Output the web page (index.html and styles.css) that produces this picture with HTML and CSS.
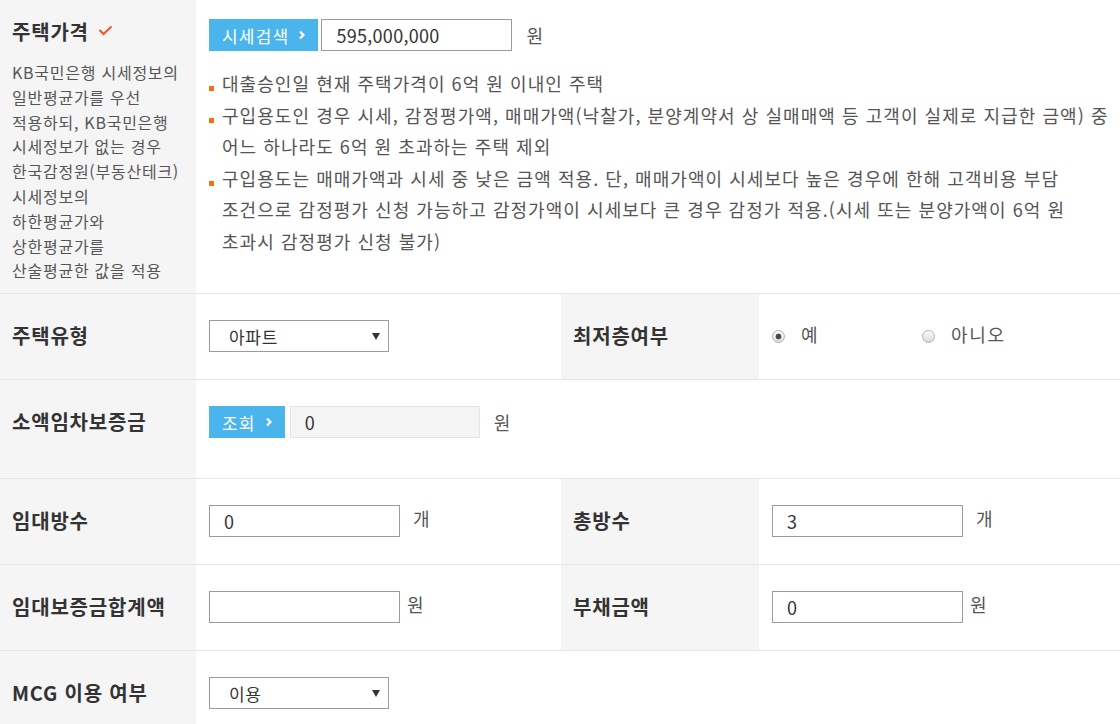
FILE: index.html
```html
<!DOCTYPE html>
<html lang="ko">
<head>
  <meta charset="UTF-8">
  <meta name="viewport" content="width=device-width, initial-scale=1.0">
  <title>주택가격 입력</title>
  <link rel="stylesheet" href="styles.css">
</head>
<body>
  <table class="form-table">
    <colgroup>
      <col class="col-th">
      <col class="col-td">
      <col class="col-th2">
      <col>
    </colgroup>
    <tr class="row-price">
      <th>
        <div class="th-title">주택가격
          <svg class="check" width="15" height="11" viewBox="0 0 15 11"><polyline points="1.5,5 5.5,9 13.5,1.5" fill="none" stroke="#f15a2b" stroke-width="2.2"/></svg>
        </div>
        <p class="th-desc">KB국민은행 시세정보의<br>일반평균가를 우선<br>적용하되, KB국민은행<br>시세정보가 없는 경우<br>한국감정원(부동산테크)<br>시세정보의<br>하한평균가와<br>상한평균가를<br>산술평균한 값을 적용</p>
      </th>
      <td colspan="3">
        <div class="field">
          <button class="btn-blue">시세검색
            <svg class="chev" width="6" height="10" viewBox="0 0 6 10"><polyline points="1,1.5 4.5,5 1,8.5" fill="none" stroke="#fff" stroke-width="2.2"/></svg>
          </button>
          <input class="inp inp-price" type="text" value="595,000,000">
          <span class="unit unit-wide">원</span>
        </div>
        <ul class="notes">
          <li>대출승인일 현재 주택가격이 6억 원 이내인 주택</li>
          <li>구입용도인 경우 시세, 감정평가액, 매매가액(낙찰가, 분양계약서 상 실매매액 등 고객이 실제로 지급한 금액) 중 어느 하나라도 6억 원 초과하는 주택 제외</li>
          <li>구입용도는 매매가액과 시세 중 낮은 금액 적용. 단, 매매가액이 시세보다 높은 경우에 한해 고객비용 부담 조건으로 감정평가 신청 가능하고 감정가액이 시세보다 큰 경우 감정가 적용.(시세 또는 분양가액이 6억 원 초과시 감정평가 신청 불가)</li>
        </ul>
      </td>
    </tr>
    <tr>
      <th>주택유형</th>
      <td>
        <div class="select">
          <select><option>아파트</option></select>
        </div>
      </td>
      <th class="th-right">최저층여부</th>
      <td class="td-right">
        <div class="field">
          <label class="radio-opt"><input type="radio" name="low" checked><span>예</span></label>
          <label class="radio-opt"><input type="radio" name="low"><span>아니오</span></label>
        </div>
      </td>
    </tr>
    <tr class="row-deposit">
      <th>소액임차보증금</th>
      <td colspan="3">
        <div class="field">
          <button class="btn-blue btn-small">조회
            <svg class="chev" width="6" height="10" viewBox="0 0 6 10"><polyline points="1,1.5 4.5,5 1,8.5" fill="none" stroke="#fff" stroke-width="2.2"/></svg>
          </button>
          <input class="inp inp-readonly" type="text" value="0" readonly>
          <span class="unit unit-wide">원</span>
        </div>
      </td>
    </tr>
    <tr>
      <th>임대방수</th>
      <td>
        <div class="field">
          <input class="inp" type="text" value="0">
          <span class="unit unit-up">개</span>
        </div>
      </td>
      <th class="th-right">총방수</th>
      <td class="td-right">
        <div class="field">
          <input class="inp" type="text" value="3">
          <span class="unit unit-up">개</span>
        </div>
      </td>
    </tr>
    <tr>
      <th>임대보증금합계액</th>
      <td>
        <div class="field">
          <input class="inp" type="text" value="">
          <span class="unit unit-up unit-near">원</span>
        </div>
      </td>
      <th class="th-right">부채금액</th>
      <td class="td-right">
        <div class="field">
          <input class="inp" type="text" value="0">
          <span class="unit unit-up unit-near">원</span>
        </div>
      </td>
    </tr>
    <tr>
      <th>MCG 이용 여부</th>
      <td colspan="3">
        <div class="select select-short">
          <select><option>이용</option></select>
        </div>
      </td>
    </tr>
  </table>
</body>
</html>
```

FILE: styles.css
```css
* {
  box-sizing: border-box;
}
body {
  margin: 0;
  font-family: "Noto Sans CJK KR", "Noto Sans", sans-serif;
  color: #555;
  background: #fff;
}
.form-table {
  width: 1120px;
  border-collapse: collapse;
  table-layout: fixed;
}
.col-th {
  width: 196px;
}
.col-td {
  width: 365px;
}
.col-th2 {
  width: 198px;
}
.form-table th,
.form-table td {
  padding: 26px 0 27px 13px;
  border-bottom: 1px solid #e6e6e6;
  vertical-align: top;
  text-align: left;
}
.form-table th {
  padding-left: 12px;
  background: #f5f5f5;
  color: #333;
  font-size: 20px;
  font-weight: bold;
  line-height: 32px;
  letter-spacing: .8px;
}
.form-table td {
  font-size: 18px;
  letter-spacing: 1px;
}

/* first row */
.row-price th {
  padding: 19px 8px 10px 12px;
}
.row-price td {
  padding: 19px 10px 10px 13px;
}
.th-title {
  display: flex;
  align-items: center;
  line-height: 26px;
}
.check {
  margin: 0 0 3px 9px;
}
.th-desc {
  margin: 15px 0 0;
  font-size: 16px;
  font-weight: normal;
  line-height: 24.8px;
  letter-spacing: .75px;
  color: #555;
}
.notes {
  margin: 17px 0 0;
  padding: 0;
  list-style: none;
  font-size: 18px;
  line-height: 31.5px;
  letter-spacing: 1.05px;
  word-break: keep-all;
}
.notes li {
  position: relative;
  padding-left: 13px;
}
.notes li::before {
  content: "";
  position: absolute;
  left: 0;
  top: 18px;
  width: 5px;
  height: 5px;
  background: #f5700a;
}

.row-deposit th,
.row-deposit td {
  padding-bottom: 40px;
}

.field {
  display: flex;
  align-items: center;
  height: 32px;
}
.btn-blue {
  display: inline-flex;
  align-items: center;
  height: 32px;
  margin-right: 3px;
  padding: 0 13px;
  border: 0;
  background: #4ab5ec;
  color: #fff;
  font-family: inherit;
  font-size: 17px;
  letter-spacing: 1.2px;
}
.btn-blue .chev {
  margin-left: 10px;
}
.btn-small {
  margin-right: 5px;
}
.inp {
  width: 191px;
  height: 32px;
  padding: 0 14px;
  border: 1px solid #9c9c9c;
  background: #fff;
  color: #333;
  font-family: inherit;
  font-size: 18px;
  letter-spacing: .3px;
}
.inp-readonly {
  width: 190px;
  border-color: #e3e3e3;
  background: #f5f5f5;
}
.unit {
  margin-left: 13px;
  font-size: 18px;
  color: #555;
}
.unit-wide {
  margin-left: 14px;
}
.unit-up {
  margin-bottom: 6px;
}
.unit-near {
  margin-left: 7px;
}

.select {
  position: relative;
  width: 180px;
  height: 32px;
}
.select select {
  width: 100%;
  height: 32px;
  padding: 0 19px;
  border: 1px solid #9c9c9c;
  background: #fff;
  color: #333;
  font-family: inherit;
  font-size: 17px;
  letter-spacing: .7px;
  appearance: none;
  -webkit-appearance: none;
}
.select::after {
  content: "";
  position: absolute;
  right: 9px;
  top: 13px;
  border-left: 4px solid transparent;
  border-right: 4px solid transparent;
  border-top: 7px solid #333;
}

.radio-opt {
  display: inline-flex;
  align-items: center;
  width: 150px;
  font-size: 18px;
  letter-spacing: 1.7px;
  color: #555;
}
.radio-opt input {
  width: 13px;
  height: 13px;
  margin: 0 16px 0 0;
  border: 1px solid #b3b3b3;
  border-radius: 50%;
  background: linear-gradient(#fdfdfd, #d9d9d9);
  appearance: none;
  -webkit-appearance: none;
}
.radio-opt input:checked {
  background: radial-gradient(circle, #4a4a4a 0 2.6px, transparent 3.2px), linear-gradient(#fdfdfd, #d9d9d9);
}
.radio-opt span {
  margin-bottom: 4px;
}
```
